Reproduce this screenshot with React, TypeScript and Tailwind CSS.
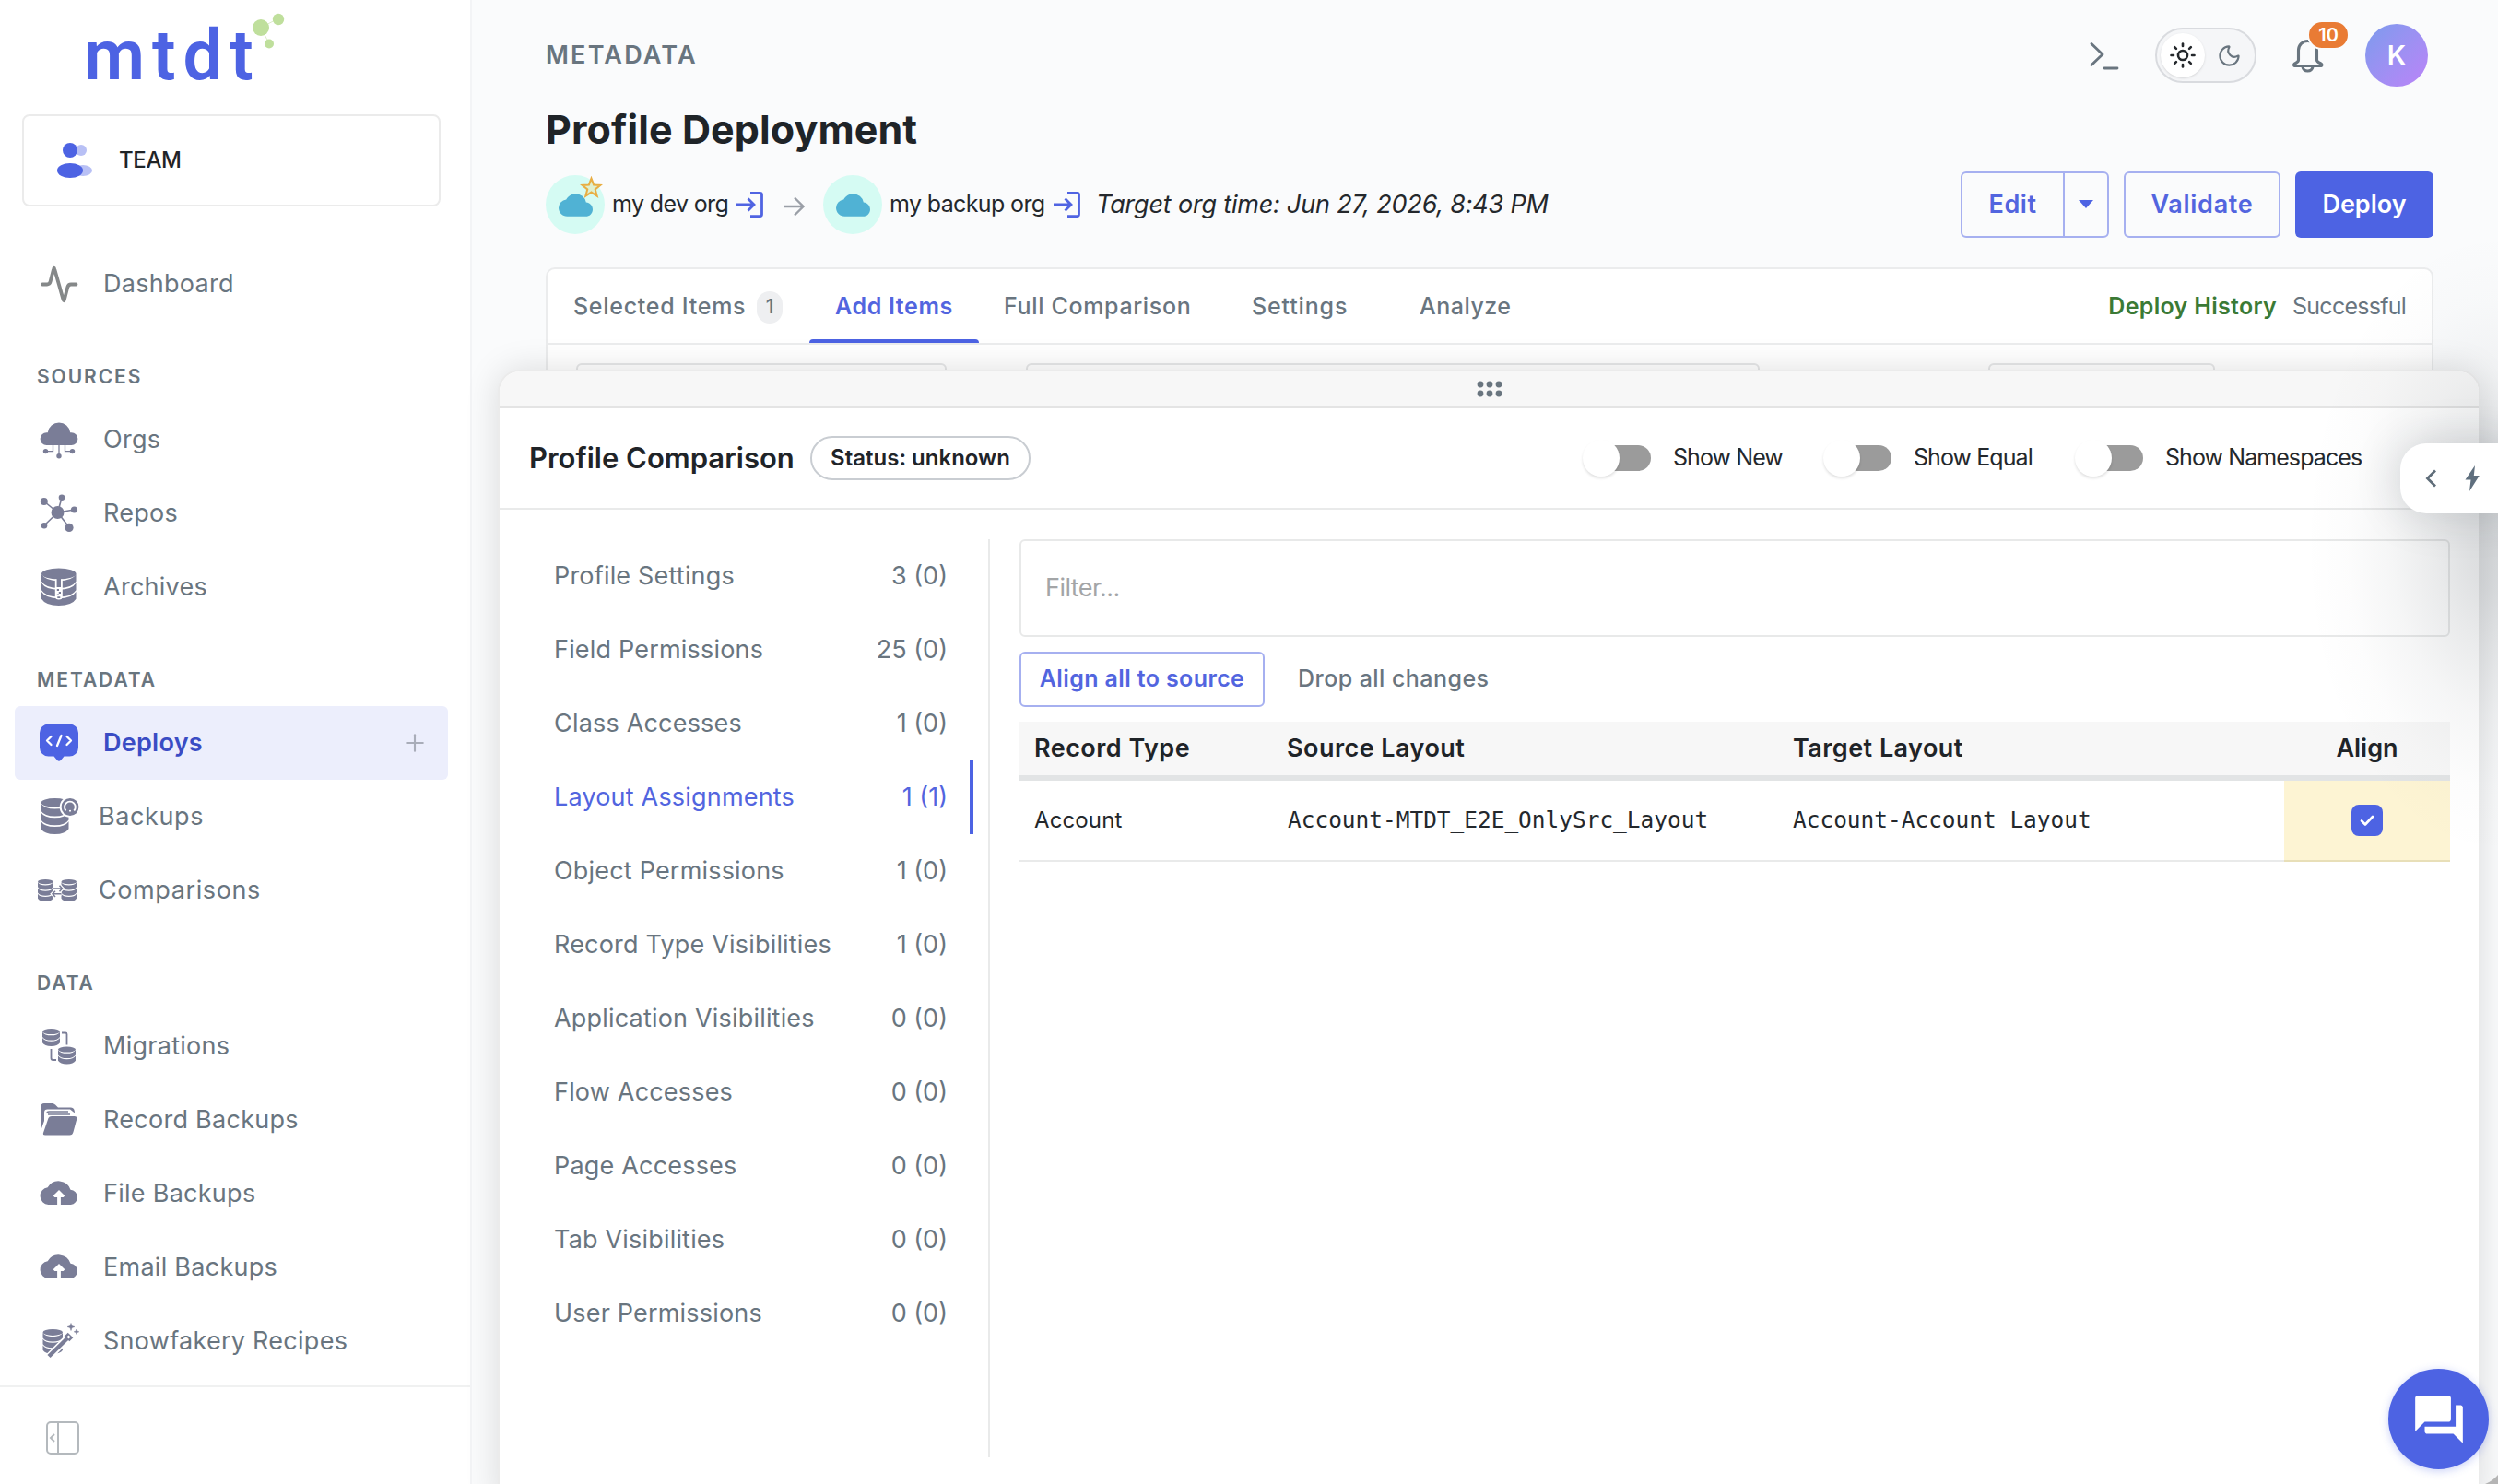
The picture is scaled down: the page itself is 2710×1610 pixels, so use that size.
import React from "react";
import { MdQuestionAnswer, MdCloud } from "react-icons/md";
import { Sun, Moon, Plus } from "lucide-react";

const slate = "#7a7d97";

/* ---------- sidebar icons ---------- */

function LogoDots() {
  return (
    <svg viewBox="0 0 40 42" className="h-[42px] w-[40px]">
      <path d="M11 17 L30 7 M11 17 L20 34" stroke="#dcedc8" strokeWidth="1" />
      <circle cx="11" cy="17" r="9" fill="#bfdf9c" />
      <circle cx="30" cy="8" r="6.2" fill="#bfdf9c" />
      <circle cx="20" cy="34.500" r="5" fill="#bfdf9c" />
    </svg>
  );
}

function TeamIcon() {
  return (
    <svg viewBox="0 0 38 38" className="h-[38px] w-[38px]">
      <circle cx="26" cy="8" r="6" fill="#b8c0f5" />
      <ellipse cx="28" cy="30" rx="10" ry="6" fill="#b8c0f5" />
      <circle cx="14" cy="8" r="8" fill="#4d63e3" />
      <ellipse cx="14" cy="30" rx="14" ry="8" fill="#4d63e3" />
    </svg>
  );
}

function PulseIcon() {
  return (
    <svg viewBox="0 0 42 42" className="size-[42px]" fill="none" stroke="#858889" strokeWidth="3.8" strokeLinecap="round" strokeLinejoin="round">
      <path d="M3 21.500H8Q10.800 21.500 11.600 18.600L15 5.200Q15.600 2.200 16.300 5.200L25.400 37.500Q26.300 41 27 37.500L30.300 24.600Q31.200 21.500 34 21.500H39.500" />
    </svg>
  );
}

function OrgsIcon() {
  return (
    <svg viewBox="0 0 42 42" className="size-[42px]" fill={slate}>
      <path d="M7.500 27a6.900 6.900 0 0 1 0-13.800h1.300a12.300 12.300 0 0 1 24.400 0h1.300a6.900 6.900 0 0 1 0 13.800z" />
      <path d="M14.500 27v6.600H7M21 27v11M27.500 27v6.600H35" fill="none" stroke={slate} strokeWidth="1.300" />
      <circle cx="6.500" cy="33.600" r="2.700" />
      <circle cx="35.500" cy="33.600" r="2.700" />
      <circle cx="21" cy="38.700" r="2.700" />
    </svg>
  );
}

function ReposIcon() {
  return (
    <svg viewBox="0 0 42 42" className="size-[42px]" fill={slate}>
      <path d="M19.500 20L5 8M19.500 20L24 4M19.500 20L37.500 17M19.500 20L5 34M19.500 20L32 36" stroke={slate} strokeWidth="1.600" />
      <circle cx="19.500" cy="20" r="7" />
      <circle cx="4.800" cy="8" r="4" />
      <circle cx="24" cy="3.800" r="3.300" />
      <circle cx="37.500" cy="17" r="3.600" />
      <circle cx="5" cy="34.200" r="3.300" />
      <circle cx="32" cy="36.400" r="4.600" />
    </svg>
  );
}

function ArchivesIcon() {
  return (
    <svg viewBox="0 0 42 42" className="size-[42px]">
      <Stack x={2} y={0.500} w={37.500} h={40.500} />
      <path d="M16.800 12.500V31q0 3.500 4 3.500t4-3.500V12.500z" fill="#fff" />
      <path d="M18.600 10h4.400v11h-4.400zM18.800 23h2.200v2h-2.200zM20.800 26h2.200v2h-2.200zM18.800 28.500h2.200v1.500h-2.200zM19.300 31.200h3v1.800h-3z" fill={slate} />
    </svg>
  );
}

function DeploysIcon() {
  return (
    <svg viewBox="0 0 42 42" className="size-[42px]">
      <path d="M9.500 0.500h23a9.500 9.500 0 0 1 9.500 9.500v16a9.500 9.500 0 0 1-9.500 9.500h-6L23 39.800q-2 2-4 0L15.500 35.500h-6A9.500 9.500 0 0 1 0 26V10A9.500 9.500 0 0 1 9.500 0.500z" fill="#4d63e3" />
      <path d="M12.500 14L8 18.500L12.500 23M23.500 13L19 24M29.500 14L34 18.500L29.500 23" fill="none" stroke="#fff" strokeWidth="2.300" strokeLinecap="round" strokeLinejoin="round" />
    </svg>
  );
}

/* A stack of discs; used on its own and inside the composite database icons. */
function Stack({ x, y, w, h, rows = 3 }: { x: number; y: number; w: number; h: number; rows?: number }) {
  const e = w * 0.16;
  const step = (h - 2 * e) / rows;
  const gap = step * 0.19;
  const d = e * 1.2;
  return (
    <g fill={slate}>
      <ellipse cx={x + w / 2} cy={y + e} rx={w / 2} ry={e} />
      {Array.from({ length: rows }, (_, i) => {
        const t = y + e * 0.8 + gap + step * i;
        const b = t + step - gap;
        return (
          <path
            key={i}
            d={`M${x} ${t}Q${x + w * 0.12} ${t + d} ${x + w / 2} ${t + d}T${x + w} ${t}V${b}Q${x + w * 0.88} ${b + d} ${x + w / 2} ${b + d}T${x} ${b}z`}
          />
        );
      })}
    </g>
  );
}

function BackupsIcon() {
  return (
    <svg viewBox="0 0 42 42" className="size-[42px] overflow-visible">
      <Stack x={1.500} y={1} w={30} h={39} />
      <circle cx="33" cy="10.500" r="11.300" fill="#fff" />
      <circle cx="33" cy="10.500" r="9.400" fill={slate} />
      <path d="M28.500 14.500a5.900 5.900 0 1 1 8.800 0M33 10.500v5" fill="none" stroke="#fff" strokeWidth="1.900" />
      <circle cx="33" cy="11.500" r="2.500" fill={slate} />
    </svg>
  );
}

function ComparisonsIcon() {
  return (
    <svg viewBox="2 0 42 42" className="size-[42px] overflow-visible">
      <Stack x={0} y={9} w={16.500} h={24} />
      <Stack x={25.500} y={9} w={16.500} h={24} />
      <path d="M17 19h9M23.500 15.800l3 3.200-3 3.200M25.500 24.800h-9M19 21.800l-3 3 3 3.200" fill="none" stroke="#fff" strokeWidth="4" />
      <path d="M17 19h9M23.500 15.800l3 3.200-3 3.200M25.500 24.800h-9M19 21.800l-3 3 3 3.200" fill="none" stroke={slate} strokeWidth="1.500" />
    </svg>
  );
}

function MigrationsIcon() {
  return (
    <svg viewBox="0 0 42 42" className="size-[42px]">
      <Stack x={3} y={2} w={19} h={19} rows={2} />
      <Stack x={20} y={21.500} w={19} h={19} rows={2} />
      <path d="M24 6.500h4q1.500 0 1.500 1.500v11.500M12.500 24v10q0 2 2 2h3.500" fill="none" stroke={slate} strokeWidth="1.800" />
    </svg>
  );
}

function FolderIcon() {
  return (
    <svg viewBox="0 0 42 42" className="size-[42px]" fill={slate}>
      <path d="M1 33V8q0-5 4-5h8.500q2 0 3.500 1.600l3 3H34q4 0 4 6l-2.500-2.200L33 9.600H8.500Q5 9.600 5 13v9z" />
      <path d="M7.500 14q.5-2 2.500-2h21M9 15h24" fill="none" stroke={slate} strokeWidth="1.300" />
      <path d="M13 17h24.500q3.500 0 2.800 3L36.500 34q-.8 3.500-4 3.500H6q-2.800 0-2-2.500L9.500 19Q10.300 17 13 17z" />
    </svg>
  );
}

function UploadCloud() {
  return (
    <svg viewBox="0 1.5 42 42" className="size-[42px]">
      <path d="M9.500 34.500a9.400 9.400 0 0 1-.8-18.700A13.600 13.600 0 0 1 33.500 18.200a8.200 8.200 0 0 1 .3 16.300z" fill={slate} />
      <path d="M21 35V22" fill="none" stroke="#fff" strokeWidth="3.800" />
      <path d="M21 18.500l6.300 6.300-1.600 1.600h-9.400l-1.600-1.600z" fill="#fff" />
    </svg>
  );
}

function SnowIcon() {
  return (
    <svg viewBox="0 0 42 42" className="size-[42px] overflow-visible">
      <Stack x={3.500} y={8} w={21.500} h={27} />
      <path d="M9 39L33 15" stroke="#fff" strokeWidth="8" />
      <path d="M10 37.500L30 18" stroke={slate} strokeWidth="4.500" />
      <path d="M29.500 18.500L33.500 14.500" stroke={slate} strokeWidth="8" />
      <path d="M30.500 17.500L32.500 15.500" stroke="#fff" strokeWidth="3" />
      <path d="M34 1.500l1 3 3 1-3 1-1 3-1-3-3-1 3-1zM40 8l.8 2 2 .8-2 .8-.8 2-.8-2-2-.8 2-.8z" fill={slate} stroke={slate} strokeWidth=".5" />
    </svg>
  );
}

/* ---------- sidebar ---------- */

type Item = { label: string; icon: React.ReactNode; active?: boolean; tight?: boolean };

const groups: { title: string; items: Item[] }[] = [
  {
    title: "SOURCES",
    items: [
      { label: "Orgs", icon: <OrgsIcon /> },
      { label: "Repos", icon: <ReposIcon /> },
      { label: "Archives", icon: <ArchivesIcon /> },
    ],
  },
  {
    title: "METADATA",
    items: [
      { label: "Deploys", icon: <DeploysIcon />, active: true },
      { label: "Backups", icon: <BackupsIcon />, tight: true },
      { label: "Comparisons", icon: <ComparisonsIcon />, tight: true },
    ],
  },
  {
    title: "DATA",
    items: [
      { label: "Migrations", icon: <MigrationsIcon /> },
      { label: "Record Backups", icon: <FolderIcon /> },
      { label: "File Backups", icon: <UploadCloud /> },
      { label: "Email Backups", icon: <UploadCloud /> },
      { label: "Snowfakery Recipes", icon: <SnowIcon /> },
    ],
  },
];

function NavRow({ item }: { item: Item }) {
  return (
    <div
      className={
        "mx-4 mr-6 flex h-20 items-center rounded-md pl-[27px] pr-[21px] text-[27px] " +
        (item.active ? "bg-[#eceefc] font-semibold text-[#3a4cc4]" : "text-[#69757f]")
      }
    >
      <span className="flex w-[42px] shrink-0">{item.icon}</span>
      <span className={item.tight ? "ml-[22px] tracking-[0.022em]" : "ml-[27px] tracking-[0.010em]"}>{item.label}</span>
      {item.active && <Plus className="ml-auto size-[30px] text-[#a9adb9]" strokeWidth={1.700} />}
    </div>
  );
}

function Sidebar() {
  return (
    <aside className="flex h-full w-[512px] shrink-0 flex-col border-r-2 border-[#f3f4f6] bg-white">
      <div className="flex h-[124px] pl-[91px]">
        <span className="mt-[15px] font-[Roboto] text-[76px] font-semibold leading-[90px] tracking-[0.105em] text-[#4d63e3]">mtdt</span>
        <span className="-ml-[11px] mt-[13px]">
          <LogoDots />
        </span>
      </div>
      <div className="ml-6 flex h-[100px] w-[454px] items-center rounded-lg border-2 border-[#ebebeb] pl-9">
        <TeamIcon />
        <span className="ml-[29px] text-[24px] font-medium tracking-[-0.015em] text-[#1f2428]">TEAM</span>
      </div>
      <div className="mt-11">
        <NavRow item={{ label: "Dashboard", icon: <PulseIcon /> }} />
      </div>
      {groups.map((g) => (
        <div key={g.title}>
          <div className="flex h-[89px] items-center pl-10 pt-[33px] text-[21px] font-semibold tracking-[0.092em] text-[#69757f]">
            {g.title}
          </div>
          {g.items.map((it) => (
            <NavRow key={it.label} item={it} />
          ))}
        </div>
      ))}
      <div className="mt-auto flex h-[107px] items-center border-t-2 border-[#f0f1f1] pl-[49px] pt-1">
        <svg viewBox="0 0 38 38" className="size-[38px]" fill="none" stroke="#b4b9bd" strokeWidth="2">
          <rect x="2" y="2" width="34" height="34" rx="4" />
          <path d="M14 2v34M10 15l-4 4 4 4" />
        </svg>
      </div>
    </aside>
  );
}

/* ---------- header ---------- */

function SignIn() {
  return (
    <svg viewBox="0 0 30 30" className="size-[30px]" fill="none" stroke="#5064e2" strokeWidth="2.800">
      <path d="M15 2.400h10.500q2 0 2 2v21.200q0 2-2 2H15" />
      <path d="M0 15h19M12.500 8.500l6.500 6.500-6.500 6.500" />
    </svg>
  );
}

function OrgBadge({ star }: { star?: boolean }) {
  return (
    <span className="relative flex size-16 items-center justify-center rounded-full bg-[#d5fbf3]">
      <MdCloud className="size-[37px]" color="#50b2d4" />
      {star && (
        <svg viewBox="0 0 24 24" className="absolute top-px left-[37px] size-[25px]" fill="#dff0cf" stroke="#e8ae44" strokeWidth="2">
          <path d="M12 2.500l2.500 6.600 7 .4-5.400 4.400 1.800 6.900-5.900-3.900-5.900 3.900 1.800-6.900L2.500 9.500l7-.4z" />
        </svg>
      )}
    </span>
  );
}

function TopBar() {
  return (
    <div className="flex h-[120px] items-center pr-[76px]">
      <span className="text-[27px] font-semibold tracking-[0.082em] text-[#69757f]">METADATA</span>
      <div className="ml-auto flex items-center">
        <svg viewBox="0 0 32 32" className="size-8" fill="none" stroke="#69757f" strokeWidth="2.800" strokeLinecap="round" strokeLinejoin="round">
          <path d="M2 3.500l12 11.500-12 11.500M16 30h14" />
        </svg>
        <div className="ml-[39px] flex h-[60px] w-[110px] items-center rounded-full border-2 border-[#d9dbdf] bg-[#f5f6f8] pl-1">
          <span className="flex size-12 items-center justify-center rounded-full bg-white shadow-sm">
            <Sun className="size-[30px] text-[#24282c]" strokeWidth={2.100} />
          </span>
          <span className="flex w-[52px] items-center justify-center">
            <Moon className="size-[27px] text-[#69757f]" strokeWidth={1.900} />
          </span>
        </div>
        <div className="relative ml-[38px] flex h-[60px] w-9 items-center">
          <svg viewBox="0 0 36 40" className="h-10 w-9" fill="none" stroke="#69757f" strokeWidth="3.100" strokeLinecap="round" strokeLinejoin="round">
            <path d="M7.500 25V14.500a10 10 0 0 1 20 0V25q0 2 3.500 3.500 3 1.500 1.500 3H3q-1.500-1.500 1.500-3Q7.500 27 7.500 25z" />
            <path d="M12 32.500a5.600 5.600 0 0 0 11 0" />
          </svg>
          <span className="absolute -top-[8px] left-[17px] flex h-[32px] w-[46px] items-center justify-center rounded-full border-2 border-[#fafbfc] bg-[#e97b34] text-[20px] font-semibold text-white">
            10
          </span>
        </div>
        <div className="ml-[44px] flex size-[68px] items-center justify-center rounded-full bg-linear-to-br from-[#7a9bed] to-[#ba83f8] text-[29px] font-semibold text-white">
          K
        </div>
      </div>
    </div>
  );
}

function Header() {
  return (
    <>
      <h1 className="flex h-[42px] items-center pb-[2px] text-[43px] font-bold leading-[42px] tracking-[0.002em] text-[#1f2428]">Profile Deployment</h1>
      <div className="mt-[24px] flex h-[72px] items-center pr-[70px] text-[25px] text-[#24282c]">
        <OrgBadge star />
        <span className="ml-[8px] w-[135px] tracking-[-0.025em]">my dev org</span>
        <SignIn />
        <svg viewBox="0 0 24 24" className="ml-[20px] mt-1 size-6" fill="none" stroke="#9a9fa7" strokeWidth="2.300">
          <path d="M1 12h21M13 2.500l9.500 9.500-9.500 9.500" />
        </svg>
        <span className="ml-[20px]">
          <OrgBadge />
        </span>
        <span className="ml-[8px] w-[178px] tracking-[-0.025em]">my backup org</span>
        <SignIn />
        <span className="ml-[16px] text-[27px] italic tracking-[-0.007em]">Target org time: Jun 27, 2026, 8:43 PM</span>
        <div className="ml-auto flex h-[72px] text-[27px] font-semibold text-[#5265df]">
          <div className="flex w-[161px] rounded-md border-2 border-[#a6b0f0]">
            <span className="flex flex-1 items-center justify-center tracking-[0.020em]">Edit</span>
            <span className="flex w-[48px] items-center justify-center border-l-2 border-[#a6b0f0]">
              <svg viewBox="0 0 16 10" className="h-[10px] w-4" fill="#4d63e3">
                <path d="M0 0h16L8 9z" />
              </svg>
            </span>
          </div>
          <div className="ml-4 flex w-[170px] items-center justify-center rounded-md border-2 border-[#a6b0f0] tracking-[0.026em]">Validate</div>
          <div className="ml-4 flex w-[150px] items-center justify-center rounded-md bg-[#4d63e3] text-white">Deploy</div>
        </div>
      </div>
    </>
  );
}

function TabsCard() {
  return (
    <div className="mt-8 h-[400px] w-[2048px] rounded-[10px] border-2 border-[#ebeced] bg-white">
      <div className="flex h-[82px] items-center border-b-2 border-[#ebeced] text-[25px] font-medium text-[#69757f]">
        <span className="ml-[28px] w-[199px] pt-[2px] tracking-[0.029em]">Selected Items</span>
        <span className="mt-[2px] flex h-[35px] w-7 items-center justify-center rounded-full bg-[#eeeff1] text-[21px]">1</span>
        <span className="ml-[29px] flex h-full w-[184px] flex-col items-center justify-end font-semibold text-[#5265df]">
          <span className="flex flex-1 items-center pt-[5px] tracking-[0.025em]">Add Items</span>
          <span className="h-1 w-full rounded-t bg-[#4d63e3]" />
        </span>
        <span className="ml-[27px] w-[269px] pt-[2px] tracking-[0.026em]">Full Comparison</span>
        <span className="w-[182px] pt-[2px] tracking-[0.034em]">Settings</span>
        <span className="pt-[2px] tracking-[0.020em]">Analyze</span>
        <span className="ml-auto pt-[2px] font-semibold tracking-[0.012em] text-[#3b7a35]">Deploy History</span>
        <span className="ml-[17px] mr-[28px] pt-[2px] font-normal tracking-[-0.030em]">Successful</span>
      </div>
      <div className="flex pt-5">
        <div className="ml-[31px] h-16 w-[402px] rounded-md border-2 border-[#e6e7e8]" />
        <div className="ml-[86px] h-16 w-[796px] rounded-md border-2 border-[#e6e7e8]" />
        <div className="ml-[248px] h-16 w-[246px] rounded-md border-2 border-[#e6e7e8]" />
      </div>
    </div>
  );
}

/* ---------- comparison drawer ---------- */

function Switch({ label, className }: { label: string; className: string }) {
  return (
    <span className={"flex items-center " + className}>
      <span className="relative flex h-7 w-[68px] rounded-full bg-[#9b9b9b]">
        <span className="absolute -left-[6px] -top-[6px] size-10 rounded-full bg-white shadow-[0_2px_3px_rgba(0,0,0,0.12)]" />
      </span>
      <span className="ml-6 tracking-[-0.037em]">{label}</span>
    </span>
  );
}

const sections: [string, string][] = [
  ["Profile Settings", "3 (0)"],
  ["Field Permissions", "25 (0)"],
  ["Class Accesses", "1 (0)"],
  ["Layout Assignments", "1 (1)"],
  ["Object Permissions", "1 (0)"],
  ["Record Type Visibilities", "1 (0)"],
  ["Application Visibilities", "0 (0)"],
  ["Flow Accesses", "0 (0)"],
  ["Page Accesses", "0 (0)"],
  ["Tab Visibilities", "0 (0)"],
  ["User Permissions", "0 (0)"],
];

function Drawer() {
  return (
    <div className="absolute left-[540px] top-[401px] flex h-[1230px] w-[2151px] flex-col overflow-hidden rounded-t-[24px] border-2 border-[#ebebeb] bg-white shadow-[0_0_36px_rgba(0,0,0,0.13)]">
      <div className="flex h-[40px] shrink-0 items-center justify-center border-b-2 border-[#e4e4e4] bg-[#f7f7f7]">
        <svg viewBox="0 0 28 18" className="h-[18px] w-7" fill="#69757f">
          <circle cx="4" cy="4" r="3.400" />
          <circle cx="14" cy="4" r="3.400" />
          <circle cx="24" cy="4" r="3.400" />
          <circle cx="4" cy="14" r="3.400" />
          <circle cx="14" cy="14" r="3.400" />
          <circle cx="24" cy="14" r="3.400" />
        </svg>
      </div>
      <div className="flex h-[110px] shrink-0 items-center border-b-2 border-[#e9eaea] pl-8 text-[25px] text-[#24282c]">
        <span className="w-[305px] text-[31px] font-semibold text-[#1f2428]">Profile Comparison</span>
        <span className="flex h-12 w-[239px] items-center justify-center rounded-full border-2 border-[#c9cdd2] text-[24px] font-semibold text-[#1f2428]">
          Status: unknown
        </span>
        <div className="ml-[605px] flex">
          <Switch label="Show New" className="w-[261px]" />
          <Switch label="Show Equal" className="w-[273px]" />
          <Switch label="Show Namespaces" className="" />
        </div>
      </div>
      <div className="flex pl-[59px] pt-8">
        <ul className="h-[996px] w-[473px] border-r-2 border-[#e9eaea] text-[27px] text-[#69757f]">
          {sections.map(([name, count], i) => (
            <li
              key={name}
              className={
                "mr-4 flex h-20 items-center justify-between border-r-4 pr-[24px] " +
                (i === 3 ? "border-[#4d63e3] text-[#5265df]" : "border-transparent")
              }
            >
              <span className="tracking-[0.007em]">{name}</span>
              <span>{count}</span>
            </li>
          ))}
        </ul>
        <div className="ml-8 w-[1552px]">
          <div className="flex h-[106px] items-center rounded-md border-2 border-[#e8e9e9] pl-[26px] text-[27px] tracking-[-0.020em] text-[#a3a5a7]">Filter...</div>
          <div className="mt-4 flex h-[60px] items-center text-[25px] font-semibold">
            <span className="flex h-full w-[266px] items-center justify-center rounded-md border-2 border-[#a6b0f0] tracking-[0.015em] text-[#5265df]">
              Align all to source
            </span>
            <span className="ml-[36px] font-medium tracking-[0.018em] text-[#69757f]">Drop all changes</span>
          </div>
          <div className="mt-4 grid h-16 grid-cols-[275px_549px_548px_180px] items-center border-b-[6px] border-[#e2e4e5] bg-[#f7f7f7] text-[27px] font-semibold tracking-[0.017em] text-[#1f2428]">
            <span className="pl-4">Record Type</span>
            <span className="pl-[15px]">Source Layout</span>
            <span className="pl-[15px]">Target Layout</span>
            <span className="text-center tracking-normal">Align</span>
          </div>
          <div className="grid h-[88px] grid-cols-[275px_549px_548px_180px] text-[24px] text-[#24282c]">
            <span className="flex items-center border-b-2 border-[#e9eaea] pl-4 tracking-[0.005em]">Account</span>
            <span className="flex items-center border-b-2 border-[#e9eaea] pl-4 font-['DejaVu_Sans_Mono',monospace] text-[24.450px]">
              Account-MTDT_E2E_OnlySrc_Layout
            </span>
            <span className="flex items-center border-b-2 border-[#e9eaea] pl-[15px] font-['DejaVu_Sans_Mono',monospace] text-[24.450px]">
              Account-Account Layout
            </span>
            <span className="flex items-center justify-center border-b-2 border-[#e8dfb8] bg-[#fdf4d3]">
              <span className="flex size-[34px] items-center justify-center rounded-lg bg-[#4d63e3]">
                <svg viewBox="0 0 16 12" className="h-3 w-4" fill="none" stroke="#fff" strokeWidth="2.600" strokeLinecap="round" strokeLinejoin="round">
                  <path d="M2 6.500l4 4L14 2" />
                </svg>
              </span>
            </span>
          </div>
        </div>
      </div>
    </div>
  );
}

function QuickActions() {
  return (
    <>
      <div className="absolute right-0 top-[250px] h-[680px] w-[210px] bg-[radial-gradient(ellipse_100%_50%_at_100%_50%,rgba(30,40,50,0.17)_0%,rgba(30,40,50,0.145)_15%,rgba(30,40,50,0.095)_33%,rgba(30,40,50,0.045)_55%,rgba(30,40,50,0.013)_78%,rgba(30,40,50,0)_100%)]" />
      <div className="absolute left-[2604px] top-[481px] flex h-[76px] w-[140px] items-center rounded-[28px] bg-white pl-[26px] shadow-[0_0_50px_rgba(30,40,50,0.18)]">
        <svg viewBox="0 0 14 20" className="h-5 w-[14px]" fill="none" stroke="#5f6d79" strokeWidth="2.800">
          <path d="M12 1.500L3.500 10l8.500 8.500" />
        </svg>
        <svg viewBox="0 0 16 28" className="ml-[30px] h-[28px] w-4" fill="#5f6f7e">
          <path d="M11 0L0.500 15.500H6.500L5 28L15.800 11H9.800z" />
        </svg>
      </div>
    </>
  );
}

export default function App() {
  return (
    <div className="relative flex h-[1610px] w-[2710px] overflow-hidden bg-[#fafbfc] font-[Inter,sans-serif]">
      <Sidebar />
      <main className="flex-1 pl-20">
        <TopBar />
        <Header />
        <TabsCard />
      </main>
      <Drawer />
      <QuickActions />
      <svg viewBox="0 0 14 10" className="absolute bottom-0 right-0 h-[10px] w-[14px]" fill="#b5b5b5">
        <path d="M14 0Q8 7 0 10h14z" />
      </svg>
      <div className="absolute left-[2591px] top-[1485px] flex size-[109px] items-center justify-center rounded-full bg-[#4d63e3] shadow-[0_2px_10px_rgba(77,99,227,0.3)]">
        <MdQuestionAnswer className="size-[62px] text-white" />
      </div>
    </div>
  );
}
